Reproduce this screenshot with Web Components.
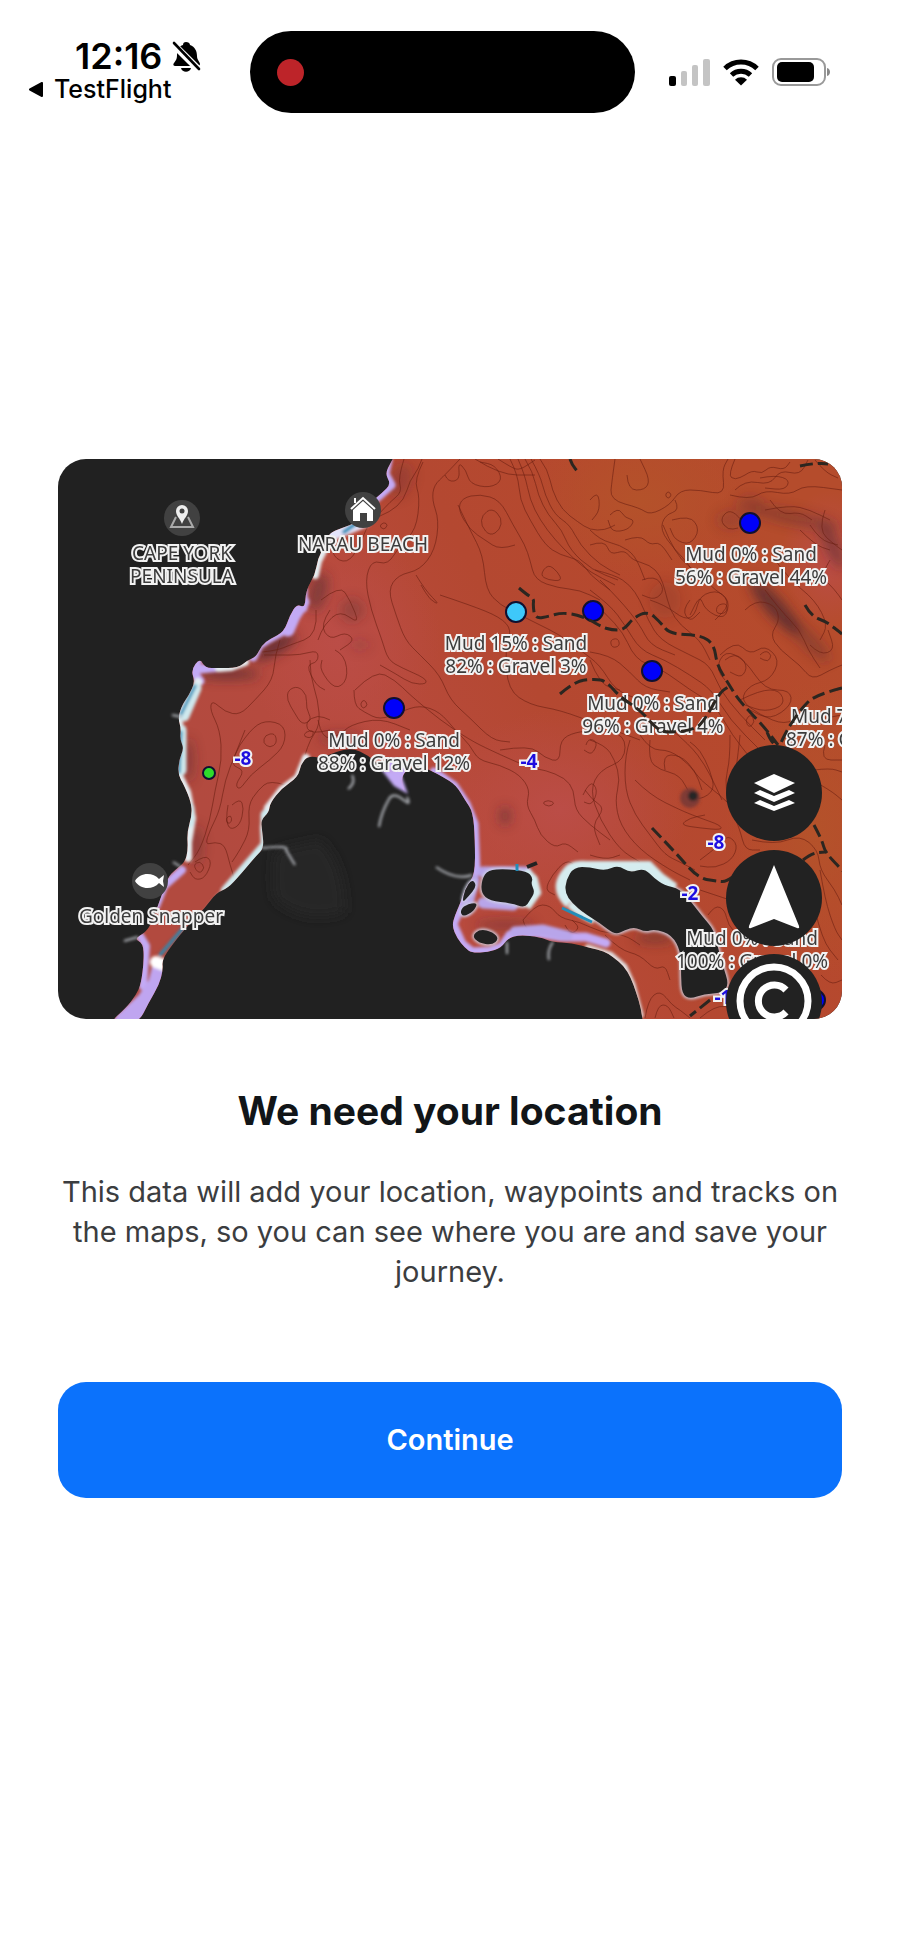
<!DOCTYPE html>
<html lang="en">
<head>
<meta charset="utf-8">
<meta name="viewport" content="width=device-width, initial-scale=1">
<title>We need your location</title>
<style>
body{margin:0;background:#fff;color:#111518;font-family:Inter,"Liberation Sans",sans-serif}
</style>
</head>
<body>
<onboarding-screen>
    <status-bar slot="status" time="12:16" back="TestFlight"></status-bar>
    <sea-map slot="art"></sea-map>
    <span slot="title">We need your location</span>
    <span slot="text">This data will add your location, waypoints and tracks on the maps, so you can see where you are and save your journey.</span>
    <action-button slot="action">Continue</action-button>
</onboarding-screen>

<script>
customElements.define('onboarding-screen', class extends HTMLElement {
    constructor() {
        super();
        this.attachShadow({ mode: 'open' }).innerHTML = `
            <style>
                :host{display:flex;flex-direction:column;min-height:100vh}
                header,footer{flex:1 0 0px}
                main{display:flex;flex-direction:column;padding:0 58px;text-align:center}
                h1{margin:68px 0 37px;font-size:39px;line-height:48px;font-weight:700}
                p{margin:0 0 90px;font-size:29px;line-height:40px;color:#3b3d40}
            </style>
            <header><slot name="status"></slot></header>
            <main>
                <slot name="art"></slot>
                <h1><slot name="title"></slot></h1>
                <p><slot name="text"></slot></p>
                <slot name="action"></slot>
            </main>
            <footer></footer>`;
    }
});

customElements.define('action-button', class extends HTMLElement {
    constructor() {
        super();
        this.attachShadow({ mode: 'open' }).innerHTML = `
            <style>
                :host{display:block}
                button{width:100%;height:116px;border:0;border-radius:28px;background:#0b72fc;color:#fff;font:600 29px/40px Inter,"Liberation Sans",sans-serif;cursor:pointer}
            </style>
            <button type="button"><slot></slot></button>`;
    }
});

customElements.define('status-bar', class extends HTMLElement {
    constructor() {
        super();
        this.attachShadow({ mode: 'open' }).innerHTML = `
            <style>
                :host{display:grid;grid-template-columns:1fr auto 1fr;align-items:start;padding:31px 15px 0 0;color:#000}
                .left{display:flex;flex-direction:column;padding:6px 0 0 28px}
                .time{display:flex;align-items:center;gap:10px;padding-left:47px;font-size:36px;line-height:38px;font-weight:600}
                a{display:flex;align-items:center;gap:10px;color:inherit;text-decoration:none;font-size:25px;line-height:28px;font-weight:500}
                .island{width:385px;height:82px;border-radius:41px;background:#000;display:flex;align-items:center}
                .rec{width:27px;height:27px;margin-left:27px;border-radius:50%;background:#bd2429}
                .right{display:flex;align-items:center;gap:13px;height:82px;padding-left:34px}
                svg{display:block;flex:none}
            </style>
            <div class="left">
                <div class="time"><span>${this.getAttribute('time')}</span>
                    <svg width="29" height="31" viewBox="0 0 29 31" aria-label="Silent">
                        <path d="M14 1c2 0 4 1 4 3 5 2 7 6 7 11 0 4 3 6 3 8 0 1-1 2-2 2H3c-2 0-2-2-1-3 2-3 3-4 3-8 0-5 2-9 6-10 0-2 1-3 3-3zM9 27h10c-1 5-9 5-10 0z"/>
                        <path d="M0 2l28 28" stroke="#fff" stroke-width="7"/>
                        <path d="M2 2l25 26" stroke="#000" stroke-width="2.6" stroke-linecap="round"/>
                    </svg>
                </div>
                <a href="#"><svg width="16" height="15" viewBox="0 0 16 15"><path d="M14 1v13L2 7.500z" stroke="#000" stroke-width="2" stroke-linejoin="round"/></svg>${this.getAttribute('back')}</a>
            </div>
            <div class="island"><div class="rec"></div></div>
            <div class="right">
                <svg width="41" height="27" viewBox="0 0 41 27" aria-label="Signal">
                    <rect y="17" width="7" height="10" rx="2"/>
                    <g fill="#c4c4c4"><rect x="12" y="12" width="6" height="15" rx="2"/><rect x="23" y="6" width="6" height="21" rx="2"/><rect x="34" width="7" height="27" rx="2"/></g>
                </svg>
                <svg width="36" height="27" viewBox="0 0 36 27" aria-label="Wi-Fi" fill="none" stroke="#000" stroke-width="5">
                    <path d="M2 9.500a23 23 0 0 1 32 0M8.500 16a14 14 0 0 1 19 0"/>
                    <path d="M18 26.500l-6-5.800a8.700 8.700 0 0 1 12 0z" fill="#000" stroke="none"/>
                </svg>
                <svg width="59" height="28" viewBox="0 0 59 28" aria-label="Battery">
                    <rect x="1" y="1" width="52" height="26" rx="8" fill="none" stroke="#999" stroke-width="2"/>
                    <rect x="5" y="4" width="37" height="20" rx="5"/>
                    <path d="M55 10c4 1 4 7 0 8z" fill="#888"/>
                </svg>
            </div>`;
    }
});

// "x,y x,y ..." -> a soft curve through the midpoints
function curve(list, close) {
    const pts = list.trim().split(/\s+/).map(p => p.split(',').map(Number));
    const mid = (a, b) => `${(a[0] + b[0]) / 2} ${(a[1] + b[1]) / 2}`;
    if (close) {
        let d = `M${mid(pts[pts.length - 1], pts[0])}`;
        pts.forEach((p, i) => { d += `Q${p[0]} ${p[1]} ${mid(p, pts[(i + 1) % pts.length])}`; });
        return d + 'Z';
    }
    let d = `M${pts[0][0]} ${pts[0][1]}`;
    for (let i = 1; i < pts.length - 1; i++) {
        d += `Q${pts[i][0]} ${pts[i][1]} ${mid(pts[i], pts[i + 1])}`;
    }
    return d + `L${pts[pts.length - 1].join(' ')}`;
}

const WATER = curve(`400,430 400,446 391,462 385,474 391,484 382,493 370,503 358,522 342,528 329,533 325,545 318,558 315,575 306,590 305,608 297,604
    290,615 284,632 270,639 262,645 256,657 248,660 238,668 218,668 205,668 200,658 191,670 195,682 189,695 182,705 178,718 181,728
    180,740 184,748 179,760 178,775 184,785 191,802 192,815 187,832 188,850 185,862 175,870 168,877 160,900 152,922 146,932 134,939
    143,943 144,960 141,984 136,995 126,1008 108,1024 138,1024 149,1002 159,985 163,970 162,960 172,945 188,925 205,908 216,893 228,888
    240,875 256,856 264,848 262,830 261,820 269,812 270,803 282,788 298,777 301,764 308,756 322,758 335,752 352,748 368,755 382,768
    395,775 406,795 400,775 416,765 430,770 443,777 456,785 465,800 473,812 475,840 475,875 466,886 460,904 455,915 452,926 457,938
    465,948 472,953 488,952 501,948 508,938 520,935 540,937 552,942 572,943 590,948 604,951 613,957 624,966 631,978 636,992 641,1008
    644,1030 860,1030 900,1030 900,1000 900,460 900,430`, true);

const ISLANDS = [
    '488,870 505,869 527,871 533,878 531,884 535,892 530,900 525,908 511,903 490,901 481,893 482,879',
    '566,880 574,867 590,867 605,871 618,865 630,873 644,868 654,878 664,885 680,889 692,903 702,916 714,930 718,948 723,966 729,985 722,993 704,994 690,999 682,994 681,976 681,952 672,935 655,929 645,932 635,927 625,930 615,935 600,923 585,914 572,903 565,893',
    '460,911 465,905 478,902 474,911 463,917',
    '472,936 480,929 493,932 499,939 492,945 479,943',
    '472,879 477,886 468,897 462,903 465,889'
].map(p => curve(p, true)).join('');

const CONTOURS = [
    // north west coast
    '422,459 418,470 410,480 404,500 390,512 370,520 362,540 350,562 336,560 330,545',
    '404,459 398,478 402,492 390,502 378,515',
    '423,462 414,480 420,497 416,530 400,545 388,565 372,560 365,580 371,610 382,640 388,660 402,668 425,678 427,684 412,684 396,674 380,665',
    '460,459 445,475 434,485 432,500 439,520 435,550 420,570 398,575 388,590 396,615 405,640 420,655 440,675 450,700 470,718 492,740 510,742',
    '445,475 448,482 460,480 458,462 466,470 470,484 490,488 503,480 495,465 480,462',
    '515,545 500,550 485,540 470,530 458,510 462,498 480,494 500,500 513,525 525,545 530,560 535,580 558,588 580,590 600,600',
    '458,505 470,530 483,555 486,590 500,605 520,615 540,625 560,635 580,650 600,665 615,690 640,700',
    '416,575 425,590 440,605 430,600 421,585',
    '440,595 470,605 500,617 512,630 505,650 508,690 530,705 560,710 600,725 640,740',
    '510,459 518,475 520,500 530,520 545,545 560,555 580,560 590,575 610,590',
    '518,459 525,475 530,500 540,520 555,540 575,560 590,572 615,585',
    '525,459 533,472 538,495 548,515 562,530 570,550 592,570 618,580',
    '531,459 540,475 545,495 555,515 570,525 580,545 600,565 620,575',
    '540,459 548,470 552,490 562,510 578,522 590,530 605,530 615,525',
    '498,459 512,468 520,470 535,460',
    // gulf
    '321,600 340,585 350,600 360,625 340,610 324,625 318,640',
    '335,650 345,655 348,680 335,690 320,670 322,660',
    '355,690 375,670 395,680 410,695 440,720 470,740 490,750 530,768 545,770 565,778 574,790 575,810 590,825 610,840',
    '354,690 354,705 364,712 380,720 400,712 420,705 440,712 455,730 470,745 478,760 500,765 520,775 530,790 526,805 535,820 540,835 555,848 565,842 578,852',
    '318,720 322,740 340,735 350,725 380,718 410,730',
    '280,640 275,655 273,680 255,700 240,715 225,712 212,700 210,710 220,730 222,760 215,790 210,820 200,850 188,865',
    '264,655 280,655 300,655 318,650 318,662 306,665 316,685 325,690',
    '310,660 310,675 318,700 320,725 310,740 305,755',
    '316,610 318,635 290,645 278,650 262,652',
    '240,745 250,730 265,720 285,725 285,745 270,760 250,775 240,790 235,785 245,770 230,765 240,745',
    '245,730 235,755 225,780 220,810 210,830 205,845 215,842 225,845 230,865 235,880 230,885',
    '232,805 240,798 244,808 240,825 230,830 226,820 228,805',
    '330,610 320,625 330,640 345,632 355,640 340,650',
    '285,785 270,780 258,790 248,805 250,830 240,850 232,862',
    '195,862 205,855 212,862 205,878 195,880 190,872',
    '330,730 310,735 305,722 318,715 330,720',
    '500,750 530,745 545,758 560,762 560,740 575,732 600,730 625,735 625,760 600,770 590,790 600,820 620,850 640,862',
    '585,790 592,800 605,808 592,825 600,845',
    '475,459 500,475 535,475',
    // north east shelf
    '615,459 612,480 610,500 640,508 650,515 670,505 680,490 700,490 725,495 722,470 728,459',
    '627,475 628,490 645,490 650,480 640,459',
    '735,490 745,480 770,485 780,470 800,475 808,460',
    '730,495 750,500 765,490 790,495 805,485 842,490',
    '675,500 680,510 665,515 660,530 675,550 690,565 695,580',
    '672,520 690,515 700,530 690,545 675,540 670,528',
    '663,525 675,555 700,575 715,590 730,600 725,620 705,610 700,595 690,615',
    '590,545 605,540 610,555 625,550 632,560 650,565 660,575 665,590 670,610 680,625 700,640 710,660',
    '595,570 615,575 630,585 640,600 648,620 660,640 690,655 710,665 720,690 740,715 765,740',
    '590,590 610,605 625,625 640,650 665,660 690,675 712,690 730,720 760,750',
    '590,600 620,625 635,660 660,668 690,690 715,705 732,735 752,760',
    '600,580 620,600 640,625 650,645 675,655',
    '642,580 655,575 665,590 655,600 642,595',
    '650,600 665,605 685,620 695,615 700,595 720,590 730,605 715,620',
    '745,610 755,600 775,605 780,620 770,635 780,650 800,665 812,680 830,670 842,665',
    '720,655 735,640 750,655 765,645 780,660 770,680 750,685 740,700 760,715 785,725 800,715 815,720 842,715',
    '725,660 735,652 748,665 742,678 730,672',
    '740,700 760,690 780,690 785,705 765,712 745,705',
    '760,655 765,650 772,655 768,662 760,658',
    '725,680 715,670 725,650 745,660 765,690 790,690 792,705 770,720 750,710',
    '830,560 820,575 835,590 842,600',
    '825,510 818,530 835,545 842,550',
    '810,645 820,655 835,650 828,630',
    '590,500 598,490 600,510 592,520',
    '610,515 618,507 625,518 635,520 628,530 612,532 608,520',
    '625,540 640,535 650,545 660,542 672,560',
    '590,530 600,540 620,545 635,555 645,580',
    '735,459 728,475 735,480 745,475',
    '760,478 775,475 790,480 785,490 765,488',
    '765,510 790,505 810,510 830,520',
    '800,530 815,545 830,550',
    '810,525 820,540 838,545',
    '590,652 610,655 630,672 645,688 670,692',
    '590,660 600,685 620,690',
    '745,475 752,470 762,474 770,466 784,470 790,462',
    '770,500 780,515 800,512 812,520',
    '745,525 738,515 728,510 720,520 728,530 738,528',
    '775,560 790,580 815,600 828,625 820,640',
    '765,590 780,610 800,630 808,650 820,668',
    '815,460 825,472 838,478',
    '690,600 682,610 690,622 700,612',
    // middle east
    '590,740 605,745 615,760 620,780 615,800 620,825 640,850 670,870 690,880',
    '630,740 625,755 625,790 635,815 650,835 665,855 680,862 695,870',
    '650,740 648,760 660,770 680,775 690,795 700,800 715,790 710,770 700,750 690,742',
    '640,735 650,750 670,750 690,765 700,780 720,795 735,810',
    '665,770 662,755 680,755 695,770 702,790',
    '672,730 690,745 705,765 715,785 722,800',
    '635,780 650,795 680,810 700,818 720,825 722,830 700,828 680,825 690,818 705,815',
    '700,860 720,845 728,835 738,845 732,860 715,868 700,866',
    '730,735 730,760 725,780 728,800 740,830 745,850 760,850',
    '740,735 738,755 735,775',
    '752,840 775,845 800,835 818,850 820,870 835,890 842,905',
    '820,870 825,900 835,930 842,940',
    '814,770 830,768 842,772',
    '812,780 830,790 842,800',
    '825,745 820,760 842,760',
    '815,910 822,940 838,960',
    '821,975 830,985 842,980',
    '708,915 715,905 725,910 728,925 740,938',
    '700,890 715,895 730,900',
    '590,855 605,860 620,855',
    '582,880 576,865 566,860 552,875 545,890 555,895',
    '523,920 535,905 550,905 560,918 580,922 600,932 625,935 640,945',
    '523,920 525,930 545,935 570,930 590,940',
    '565,925 570,935 580,928 572,920',
    '605,935 620,950 640,955 655,970 665,965 670,980',
    '645,1018 648,1000 660,990 672,1005 680,1010 690,1018',
    '655,1018 658,1005 668,1005 674,1018',
    '700,1018 715,1005 735,1008',
    '583,795 590,780 598,790 592,805 584,802',
    '586,745 588,738 598,742 592,755 584,750'
].map(p => curve(p)).join('');

const LOOPS = [
    '482,515 492,508 502,518 500,530 490,536 481,526',
    '288,690 298,686 307,695 306,708 312,720 302,725 294,712 287,700',
    '265,735 275,733 277,743 270,748 263,743',
    '542,803 548,800 555,803 549,807',
    '540,575 548,564 558,572 562,581 548,580',
    '360,704 364,699 368,705 363,709',
    '193,865 200,861 205,868 199,874',
    '305,732 314,730 312,738 304,737',
    '226,818 231,815 232,822 227,824',
    '384,522 388,525 384,530 379,526',
    '665,495 668,491 672,495 668,499',
    '745,720 751,714 755,722 749,728',
    '610,640 618,638 620,646 612,648',
    '717,605 727,603 727,613 716,614'
].map(p => curve(p, true)).join('');

const DASHES = [
    '519,588 526,594 534,599 533,605 535,619 550,616 560,613 575,614 590,620 602,627 612,630 624,630 633,618 648,611 661,623 670,634 700,635 714,644 717,665 728,683 738,699 750,712 765,728 778,745',
    '560,694 575,681 595,679 606,681 620,697 640,710 655,727 665,733 695,730 706,718 720,692 730,686',
    '570,459 572,465 579,473',
    '800,466 815,463 828,464',
    '805,605 811,616 827,622 842,634',
    '842,688 815,695 802,708 790,725 782,740 778,750',
    '652,828 675,852 698,878 715,881 728,882 745,865',
    '814,825 822,840 825,852 840,868 848,876',
    '803,860 812,853 825,852',
    '767,732 770,740 778,748',
    '710,1000 690,1016'
].map(p => curve(p)).join('');

const label = (x, y, lines, cls = '') => `<text class="${cls}" x="${x}" y="${y}">${lines.map((t, i) => `<tspan x="${x}" y="${y + i * 23}">${t}</tspan>`).join('')}</text>`;
const dot = (x, y, fill = '#0000fa', r = 10) => `<circle cx="${x}" cy="${y}" r="${r}" fill="${fill}" stroke="#101030" stroke-width="2"/>`;
const shade = (x, y, rx, ry, turn, alpha) => `<ellipse cx="${x}" cy="${y}" rx="${rx}" ry="${ry}" transform="rotate(${turn} ${x} ${y})" fill="#4a2830" opacity="${alpha}"/>`;

customElements.define('sea-map', class extends HTMLElement {
    constructor() {
        super();
        this.attachShadow({ mode: 'open' }).innerHTML = `
            <style>
                :host{display:block;border-radius:28px;overflow:hidden;background:#212121}
                svg{display:block;width:100%;height:auto}
                text{font:19px "Noto Sans","Open Sans",sans-serif;text-anchor:middle;fill:#3c3c3c;stroke:#f2f2f2;stroke-width:4px;stroke-linejoin:miter;stroke-miterlimit:3;paint-order:stroke}
                .depth{font-weight:700;fill:#1d0de0}
                .start{text-anchor:start}
            </style>
            <svg viewBox="58 459 784 560" role="img" aria-label="Seabed map">
                <defs>
                    <linearGradient id="sea" gradientUnits="userSpaceOnUse" x1="200" y1="800" x2="760" y2="500">
                        <stop offset="0" stop-color="#b24a3f"/><stop offset=".3" stop-color="#b84a3d"/>
                        <stop offset=".55" stop-color="#b44831"/><stop offset=".8" stop-color="#b6492d"/><stop offset="1" stop-color="#b54c2c"/>
                    </linearGradient>
                    <radialGradient id="rose"><stop offset="0" stop-color="#bb4d47"/><stop offset="1" stop-color="#bb4d47" stop-opacity="0"/></radialGradient>
                    <radialGradient id="amber"><stop offset="0" stop-color="#b4522a"/><stop offset="1" stop-color="#b4522a" stop-opacity="0"/></radialGradient>
                    <clipPath id="shore"><path d="${WATER}"/></clipPath>
                    <filter id="soft" x="-20%" y="-20%" width="140%" height="140%"><feGaussianBlur stdDeviation="1.500"/></filter>
                    <filter id="haze" filterUnits="userSpaceOnUse" x="58" y="459" width="784" height="560"><feGaussianBlur stdDeviation="6"/></filter>
                </defs>
                <path d="M275 850q-5 30 0 50 30 25 70 12 0-50-25-72z" fill="#262626" filter="url(#haze)"/>
                <path d="${WATER}" fill="url(#sea)"/>
                <g clip-path="url(#shore)">
                    <ellipse cx="560" cy="810" rx="130" ry="100" fill="url(#rose)"/>
                    <ellipse cx="340" cy="640" rx="100" ry="110" fill="url(#rose)"/>
                    <ellipse cx="830" cy="560" rx="50" ry="70" fill="url(#rose)"/>
                    <ellipse cx="640" cy="500" rx="110" ry="80" fill="url(#amber)"/>
                    <ellipse cx="815" cy="830" rx="90" ry="150" fill="url(#amber)"/>
                    <g filter="url(#haze)">
                        ${shade(775, 607, 36, 9, 48, .75)}${shade(808, 640, 30, 8, 45, .35)}${shade(750, 505, 14, 10, 0, .25)}${shade(795, 518, 46, 7, 12, .35)}${shade(832, 545, 7, 26, -25, .5)}
                        ${shade(352, 610, 12, 12, 0, .3)}${shade(360, 645, 10, 6, 0, .2)}${shade(275, 647, 24, 7, -30, .8)}${shade(228, 674, 32, 5, 0, .7)}${shade(318, 592, 9, 20, 15, .5)}
                        ${shade(505, 816, 5, 9, 0, .6)}${shade(188, 760, 6, 22, 0, .4)}${shade(196, 845, 6, 20, 0, .4)}${shade(505, 925, 30, 5, 0, .4)}${shade(340, 738, 22, 5, 0, .4)}
                        ${shade(730, 520, 14, 10, 0, .2)}${shade(665, 600, 16, 18, 0, .15)}${shade(400, 480, 12, 18, 20, .25)}${shade(655, 938, 20, 5, 0, .5)}
                    </g>
                    <g fill="none" stroke="#6b1f12" stroke-width="1" opacity=".6"><path d="${CONTOURS}${LOOPS}"/></g>
                    <g fill="none" filter="url(#soft)" stroke-linecap="round" stroke-linejoin="round">
                        <path d="M388 460l-3 14 6 11-10 9-12 10M303 590v18l-8-3-8 13-6 14-13 7-9 6-6 12M200 656l-8 15 8 10M200 669l20-2M434 772l20 14 12 18 8 20 2 48M474 880l-12 24-9 20 9 20 10 8 18-1 12-4 8-12 28-2 24 4 24 0 20 6" stroke="#c3aaf5" stroke-width="9"/>
                        <path d="M303 602l-9 14-6 14" stroke="#c3aaf5" stroke-width="13"/>
                        <path d="M140 936l6 10-3 40M182 870l-18 16-8 20" stroke="#c3aaf5" stroke-width="8"/>
                        <path d="M162 968l-4 16-12 18-22 20" stroke="#bfa5f0" stroke-width="20"/>
                        <path d="M483 872h42M474 880l-8 30M483 903l30 2M515 932l28-2 24 6" stroke="#b8a5ea" stroke-width="11"/>
                        <path d="M329 531l-6 20-5 10-3 14M245 662l-14 5-12 1M198 682l-10 18-10 18 4 24-3 12 0 22 8 16 5 26-4 24 0 16M306 758l-8 20-16 12-14 18-4 20 2 22-14 14-18 22-14 12-16 20-14 14-10 16" stroke="#e5eef2" stroke-width="8"/>
                        <path d="M266 815v30l-40 46M181 730v40M189 808v14M196 688l-12 28" stroke="#cfe9ee" stroke-width="11"/>
                        <path d="M156 962l8 3" stroke="#fff" stroke-width="12"/>
                        <path d="M330 534l34-14" stroke="#e4e4fb" stroke-width="15"/>
                        <path d="M588 948l22 7 14 12 8 18 8 30" stroke="#e0e0e2" stroke-width="7"/>
                        <path d="M160 955l24-28M195 686l-14 28M181 732l-2 40" stroke="#238db8" stroke-width="3"/>
                        <path d="M344 532l14-10" stroke="#238db8" stroke-width="4"/>
                        <path d="M404 774l-10-8" stroke="#c3aaf5" stroke-width="14"/>
                    </g>
                </g>
                <g filter="url(#soft)" fill="none">
                    <path d="${ISLANDS}" stroke="#cfd4e6" stroke-width="3"/>
                    <path d="M570 903q-14-14-4-28 6-10 20-8h62l12 12 14 10M524 872l8 8 3 12-10 14" stroke="#d5ecef" stroke-width="12"/>
                    <path d="M570 904q10 10 24 16" stroke="#d5ecef" stroke-width="8"/>
                    <path d="M262 848q28-3 24 2l9 15M436 867q20 14 36 8M407 797q4 9-2 4-12-10-16-2-8 14-10 28M352 775q4 8-4 14M507 942v12M553 942q-6 8-4 18M173 862l8 5M172 715l10 2M124 941l14-4" stroke="#b9bcc2" stroke-width="2"/>
                    <path d="M380 768l14 18 14 8-8-22z" fill="#c3aaf5"/>
                </g>
                <path d="${ISLANDS}" fill="#212121"/>
                <path d="M562 908l30 14" stroke="#238db8" stroke-width="3"/>
                <path d="M517 864v7" stroke="#238db8" stroke-width="3"/>
                <path d="M527 867l10-4" stroke="#222" stroke-width="4"/>
                <g filter="url(#soft)"><circle cx="690" cy="798" r="10" fill="#7f3b35"/><circle cx="693" cy="796" r="5" fill="#252525"/></g>

                ${dot(750, 523)}${dot(593, 611)}${dot(652, 671)}${dot(394, 708)}${dot(815, 1000)}
                ${dot(516, 612, '#3ec8fa')}${dot(209, 773, '#2edb2b', 6)}

                <g fill="#414141"><circle cx="182" cy="518" r="18"/><circle cx="363" cy="510" r="18"/><circle cx="150" cy="881" r="18"/></g>
                <path d="M176 517l-5 10h22l-5-10" fill="none" stroke="#aaa" stroke-width="2"/>
                <path d="M182 524c-2-6-6-8-6-13a6 6 0 0 1 12 0c0 5-4 7-6 13z" fill="#eee"/><circle cx="182" cy="511" r="2.500" fill="#414141"/>
                <path d="M351 509l12-11 12 11M355 503v-5" fill="none" stroke="#fff" stroke-width="2"/>
                <path d="M353 510l10-9 10 9v11h-6v-8h-7v8h-7z" fill="#fff"/>
                <path d="M135 881c5-9 18-9 24-2l5-4-1 6 1 6-5-4c-6 7-19 7-24-2z" fill="#fff"/>

                ${label(182, 560, ['CAPE YORK', 'PENINSULA'])}
                ${label(363, 551, ['NARAU BEACH'])}
                ${label(516, 650, ['Mud 15% : Sand', '82% : Gravel 3%'])}
                ${label(751, 561, ['Mud 0% : Sand', '56% : Gravel 44%'])}
                ${label(653, 710, ['Mud 0% : Sand', '96% : Gravel 4%'])}
                ${label(394, 747, ['Mud 0% : Sand', '88% : Gravel 12%'])}
                ${label(791, 723, ['Mud 7'], 'start')}${label(786, 746, ['87% : G'], 'start')}
                ${label(151, 923, ['Golden Snapper'])}
                ${label(752, 945, ['Mud 0% : Sand', '100% : Gravel 0%'])}
                ${label(243, 765, ['-8'], 'depth')}${label(529, 768, ['-4'], 'depth')}${label(716, 849, ['-8'], 'depth')}${label(690, 900, ['-2'], 'depth')}${label(723, 1004, ['-1'], 'depth')}

                <path d="${DASHES}" fill="none" stroke="#2b2620" stroke-width="3" stroke-dasharray="13 5"/>

                <g fill="#222"><circle cx="774" cy="793" r="48"/><circle cx="774" cy="898" r="48"/><circle cx="774" cy="1002" r="48"/></g>
                <g fill="#fff">
                    <path d="M754 783l20-9 21 9-21 10z"/>
                    <path d="M754 793l6-3 14 6 15-6 6 3-21 9zM754 803l6-3 14 6 15-6 6 3-21 8z"/>
                    <path d="M774 865l25 61q1 3-2 2l-23-9-23 9q-3 1-2-2z"/>
                </g>
                <g fill="none" stroke="#fff" stroke-width="7"><circle cx="774" cy="1001" r="34"/><path d="M786 990a16 16 0 1 0 0 22"/></g>
            </svg>`;
    }
});
</script>
</body>
</html>
